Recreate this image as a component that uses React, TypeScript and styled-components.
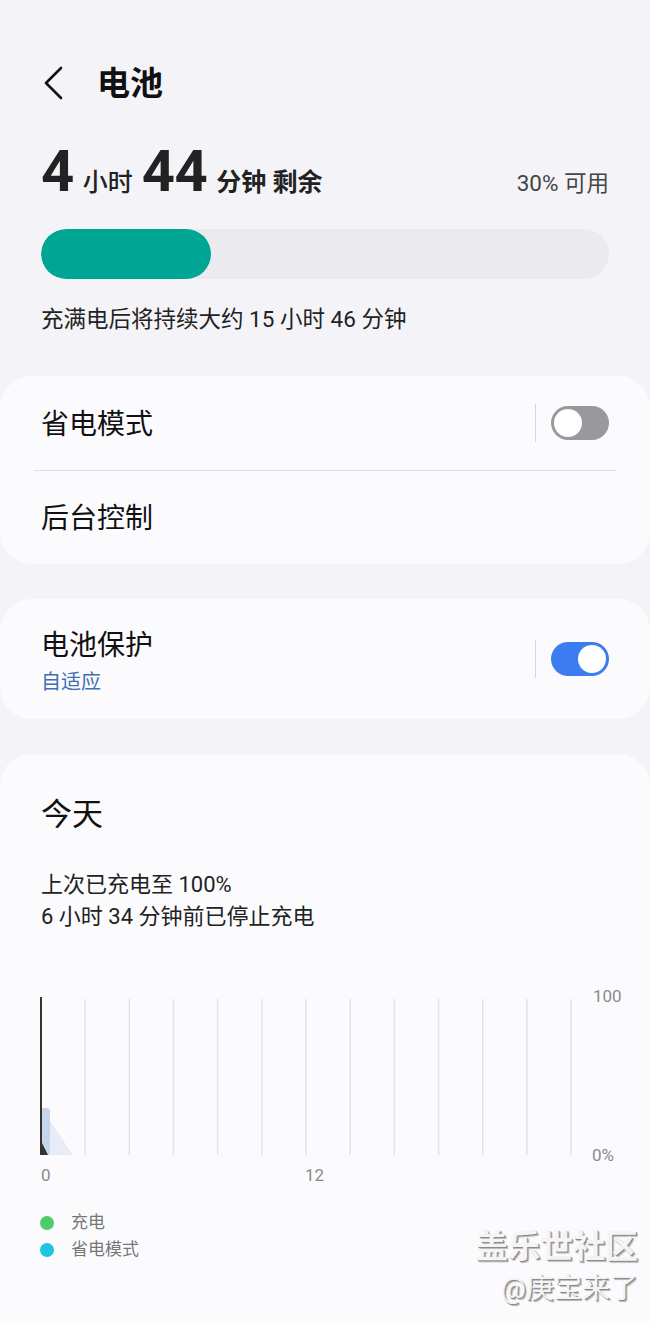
import styled, { createGlobalStyle } from "styled-components";

const GlobalStyle = createGlobalStyle`
  html, body {
    margin: 0;
    padding: 0;
    background: #f4f4f8;
  }
  body {
    font-family: Roboto, "Noto Sans CJK SC", sans-serif;
    color: #111;
  }
`;

const Page = styled.div`
  position: relative;
  width: 650px;
  height: 1323px;
  overflow: hidden;
  background: #f4f4f8;
`;

const Header = styled.div`
  display: flex;
  align-items: center;
  height: 54px;
  margin-top: 56px;
  padding-left: 41px;
`;

const Title = styled.div`
  margin-left: 32px;
  font-size: 33px;
  font-weight: 700;
  line-height: 1;
  color: #111;
`;

const Summary = styled.div`
  display: flex;
  align-items: baseline;
  justify-content: space-between;
  margin-top: 32px;
  padding: 0 41px;
  line-height: 1;
`;

const Remaining = styled.div`
  display: flex;
  align-items: baseline;
`;

const Big = styled.span`
  font-size: 58px;
  font-weight: 700;
  letter-spacing: -0.5px;
  color: #222;
  margin-right: 9px;
`;

const Unit = styled.span<{ $bold?: boolean }>`
  font-size: 25px;
  font-weight: ${(p) => (p.$bold ? 600 : 500)};
  color: #222;
  margin-right: 9px;
`;

const Available = styled.span`
  font-size: 22.5px;
  color: #444;
`;

const Track = styled.div`
  margin: 29px 41px 0;
  height: 50px;
  border-radius: 25px;
  background: #ebebef;
  overflow: hidden;
`;

const Fill = styled.div`
  height: 100%;
  border-radius: 25px;
  background: #00a693;
`;

const Note = styled.div`
  margin-top: 25px;
  padding-left: 41px;
  font-size: 22.5px;
  line-height: 30px;
  color: #222;
`;

const Card = styled.div<{ $top: number }>`
  margin-top: ${(p) => p.$top}px;
  background: #fbfbfe;
  border-radius: 32px;
`;

const Row = styled.div<{ $h: number }>`
  display: flex;
  align-items: center;
  justify-content: space-between;
  height: ${(p) => p.$h}px;
  padding: 0 41px;
`;

const RowText = styled.div`
  display: flex;
  flex-direction: column;
  gap: 4px;
`;

const Label = styled.div`
  font-size: 28px;
  line-height: 38px;
  padding-top: 3px;
  color: #111;
`;

const SubLabel = styled.div`
  font-size: 20px;
  line-height: 26px;
  color: #3e6fb5;
`;

const Divider = styled.div`
  height: 1px;
  margin: 0 34px;
  background: #dcdce0;
`;

const SwitchWrap = styled.div`
  display: flex;
  align-items: center;
  gap: 15px;
`;

const VLine = styled.div`
  width: 1px;
  height: 38px;
  background: #d6d6da;
`;

const Switch = styled.div<{ $on?: boolean }>`
  position: relative;
  width: 58px;
  height: 34px;
  border-radius: 17px;
  background: ${(p) => (p.$on ? "#3b7cf0" : "#98989d")};
`;

const Knob = styled.div<{ $on?: boolean }>`
  position: absolute;
  top: 3px;
  left: ${(p) => (p.$on ? "27px" : "3px")};
  width: 28px;
  height: 28px;
  border-radius: 50%;
  background: #fff;
`;

const TodayCard = styled(Card)`
  padding: 40px 41px 0;
  min-height: 600px;
  border-radius: 32px 32px 0 0;
`;

const TodayTitle = styled.div`
  font-size: 31px;
  line-height: 42px;
  color: #111;
`;

const Info = styled.div`
  margin-top: 33px;
  font-size: 22px;
  line-height: 32px;
  color: #222;
`;

const ChartBox = styled.div`
  margin-top: 53px;
  margin-left: -41px;
`;

const Legend = styled.div`
  display: flex;
  flex-direction: column;
  gap: 6px;
  margin-top: 22px;
`;

const LegendItem = styled.div`
  display: flex;
  align-items: center;
  gap: 17px;
  font-size: 17px;
  line-height: 21px;
  color: #777;
`;

const Dot = styled.span<{ $c: string }>`
  width: 14px;
  height: 14px;
  margin-left: -1px;
  border-radius: 50%;
  background: ${(p) => p.$c};
`;

const Watermark = styled.div`
  position: absolute;
  right: 12px;
  bottom: 18px;
  display: flex;
  flex-direction: column;
  align-items: flex-end;
  color: #f4f4f6;
  text-shadow: 1px 1px 0 #8a8a8a, 2px 2px 1px #b5b5b5;
  line-height: 1.1;
`;

const WmBig = styled.div`
  font-size: 32.5px;
  font-weight: 700;
`;

const WmSmall = styled.div`
  margin-top: 8px;
  font-size: 28px;
`;

const Chevron = () => (
  <svg width="24" height="34" viewBox="0 0 24 34">
    <path d="M20 2 L5 17 L20 32" fill="none" stroke="#111" strokeWidth="2.6" strokeLinecap="round" strokeLinejoin="round" />
  </svg>
);

const UsageChart = () => {
  const lines = Array.from({ length: 13 }, (_, i) => 41 + i * 44.17);
  return (
    <svg width="650" height="200" viewBox="0 985 650 200">
      {lines.slice(1).map((x) => (
        <line key={x} x1={x} y1={998} x2={x} y2={1154} stroke="#e2e2e7" strokeWidth="1.5" />
      ))}
      <path d="M50 1120 L73 1154 L50 1154 Z" fill="#e7edf6" />
      <path d="M41 1154 L41 1110 Q41 1107 44 1107 L47 1107 Q50 1107 50 1110 L50 1154 Z" fill="#c6d5ea" />
      <path d="M41 1140 L48 1154 L41 1154 Z" fill="#333" />
      <line x1={41} y1={996} x2={41} y2={1154} stroke="#333" strokeWidth="2" />
      <g fontFamily="Roboto, sans-serif" fontSize="17" fill="#8a8a8e">
        <text x="593" y="1001">100</text>
        <text x="592" y="1160">0%</text>
        <text x="41" y="1180">0</text>
        <text x="305" y="1180">12</text>
      </g>
    </svg>
  );
};

export default function App() {
  return (
    <>
      <GlobalStyle />
      <Page>
        <Header>
          <Chevron />
          <Title>电池</Title>
        </Header>

        <Summary>
          <Remaining>
            <Big>4</Big>
            <Unit>小时</Unit>
            <Big>44</Big>
            <Unit $bold>分钟 剩余</Unit>
          </Remaining>
          <Available>30% 可用</Available>
        </Summary>

        <Track>
          <Fill style={{ width: "30%" }} />
        </Track>

        <Note>充满电后将持续大约 15 小时 46 分钟</Note>

        <Card $top={42}>
          <Row $h={94}>
            <Label>省电模式</Label>
            <SwitchWrap>
              <VLine />
              <Switch>
                <Knob />
              </Switch>
            </SwitchWrap>
          </Row>
          <Divider />
          <Row $h={93}>
            <Label>后台控制</Label>
          </Row>
        </Card>

        <Card $top={35}>
          <Row $h={120}>
            <RowText>
              <Label>电池保护</Label>
              <SubLabel>自适应</SubLabel>
            </RowText>
            <SwitchWrap>
              <VLine />
              <Switch $on>
                <Knob $on />
              </Switch>
            </SwitchWrap>
          </Row>
        </Card>

        <TodayCard $top={35}>
          <TodayTitle>今天</TodayTitle>
          <Info>
            上次已充电至 100%
            <br />6 小时 34 分钟前已停止充电
          </Info>
          <ChartBox>
            <UsageChart />
          </ChartBox>
          <Legend>
            <LegendItem>
              <Dot $c="#4ccd68" />
              充电
            </LegendItem>
            <LegendItem>
              <Dot $c="#1cc6e3" />
              省电模式
            </LegendItem>
          </Legend>
        </TodayCard>

        <Watermark>
          <WmBig>盖乐世社区</WmBig>
          <WmSmall>@庚宝来了</WmSmall>
        </Watermark>
      </Page>
    </>
  );
}
